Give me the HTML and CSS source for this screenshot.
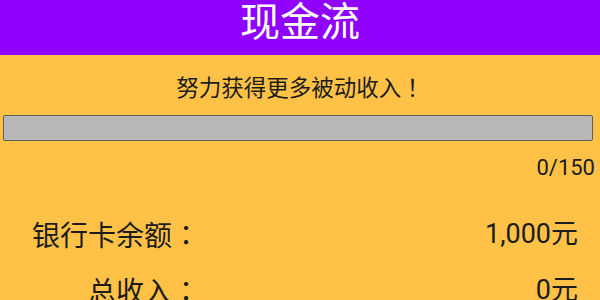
FILE: index.html
```html
<!DOCTYPE html>
<html lang="zh-CN">
<head>
    <meta charset="UTF-8">
    <title>现金流</title>
    <link rel="stylesheet" href="styles.css">
</head>
<body>

<div class="title-bar">现金流</div>

<div class="goal">
    <p class="goal-tip">努力获得更多被动收入<span class="punct">！</span></p>
    <div class="goal-bar"></div>
    <p class="goal-count">0/150</p>
</div>

<div class="summary">
    <div class="summary-row">
        <span class="summary-label">银行卡余额<span class="punct">：</span></span>
        <span class="summary-value">1,000元</span>
    </div>
    <div class="summary-row">
        <span class="summary-label">总收入<span class="punct">：</span></span>
        <span class="summary-value">0元</span>
    </div>
</div>

</body>
</html>
```

FILE: styles.css
```css
body {
    margin: 0;
    background-color: #ffc247;
    font-family: "Noto Sans CJK SC", sans-serif;
    color: #1c1c1c;
}

/* full-width marks centred in the box, as on the device */
.punct {
    font-family: "Noto Sans CJK TC", sans-serif;
    font-feature-settings: "locl" 0;
    text-spacing-trim: space-all;
}

.title-bar {
    background-color: #9000ff;
    color: #fff;
    height: 55px;
    font-size: 40px;
    line-height: 38px;
    text-align: center;
}

.goal-tip {
    margin: 0;
    padding-top: 16px;
    font-size: 22.5px;
    line-height: 30px;
    text-align: center;
}

.goal-bar {
    height: 24px;
    margin: 14px 7px 0 3px;
    background-color: #b8b8b8;
    border: 1px solid #606060;
    border-radius: 2px;
}

.goal-count {
    margin: 0;
    padding: 12px 5px 0 0;
    font-family: Roboto, sans-serif;
    font-size: 22px;
    line-height: 30px;
    text-align: right;
}

.summary {
    padding-top: 23px;
}

.summary-row {
    display: flex;
    font-size: 28px;
    line-height: 56px;
}

.summary-label {
    width: 200px;
    text-align: right;
}

.summary-value {
    flex: 1;
    text-align: right;
    padding-right: 22px;
    font-family: Roboto, "Noto Sans CJK SC", sans-serif;
    font-size: 27px;
}
```
